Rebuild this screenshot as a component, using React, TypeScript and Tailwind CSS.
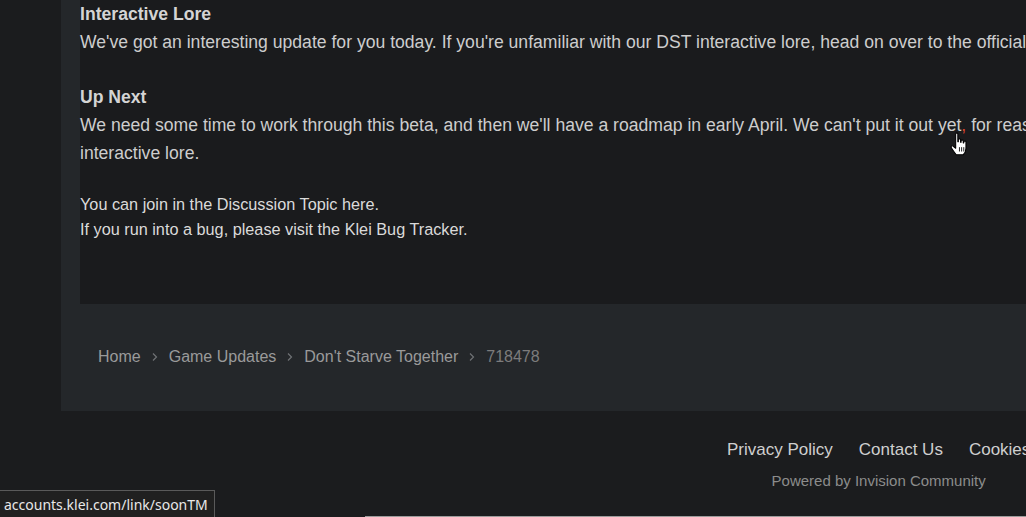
import React from "react";

function Chevron() {
  return (
    <svg width="6" height="10" viewBox="0 0 6 10" className="mx-[11px] shrink-0">
      <path d="M1 1.5 L4.5 5 L1 8.5" fill="none" stroke="#6f7275" strokeWidth="1.2" />
    </svg>
  );
}

function HandCursor() {
  return (
    <svg width="22" height="26" viewBox="0 0 20 24" className="absolute left-[949px] top-[132px]">
      <path
        d="M6 1.5 C6 0.7 8 0.7 8 1.5 L8 9 L8.5 9 L8.5 7 C8.5 6.2 10.5 6.2 10.5 7 L10.5 9.5 L11 9.5 L11 8 C11 7.2 13 7.2 13 8 L13 10 L13.5 10 L13.5 9 C13.5 8.2 15.5 8.2 15.5 9 L15.5 15 C15.5 18 14 20 13 21 L6.5 21 C5 19 3.5 17 2 14.5 C1.3 13.3 2.5 12.3 3.5 13 L6 15 Z"
        fill="#ffffff"
        stroke="#000000"
        strokeWidth="1"
        strokeLinejoin="round"
      />
      <path d="M9.5 14 L9.5 18 M11.5 14 L11.5 18 M13.5 14 L13.5 18" stroke="#000" strokeWidth="0.8" />
    </svg>
  );
}

export default function App() {
  return (
    <div
      className="relative w-[1026px] h-[517px] overflow-hidden bg-[#1b1c1e]"
      style={{ fontFamily: '"Liberation Sans", Arial, sans-serif' }}
    >
      <div className="ml-[61px] w-[1400px] bg-[#24272a] pl-[19px]">
        <div className="bg-[#1a1b1d] h-[304px] text-[17.6px] leading-[28px] text-[#cdcdcd]">
          <div className="whitespace-nowrap">
            <div className="font-bold text-[#d4d4d4]">Interactive Lore</div>
            <div>
              We've got an interesting update for you today. If you're unfamiliar with our DST interactive lore, head on over to the official forums to catch up.
            </div>
          </div>
          <div className="mt-[27px] whitespace-nowrap">
            <div className="font-bold text-[#d4d4d4]">Up Next</div>
            <div>
              We need some time to work through this beta, and then we'll have a roadmap in early April. We can't put it out yet
              <span className="text-[#d9452f]">,</span> for reasons related to the
            </div>
            <div>interactive lore.</div>
          </div>
          <div className="mt-[25px] text-[16.25px] leading-[25px] text-[#dadada] whitespace-nowrap">
            <div>You can join in the Discussion Topic here.</div>
            <div>If you run into a bug, please visit the Klei Bug Tracker.</div>
          </div>
        </div>
        <div className="h-[107px] pb-[2px] flex items-center pl-[18px] text-[16px] text-[#9a9a9a]">
          <span>Home</span>
          <Chevron />
          <span>Game Updates</span>
          <Chevron />
          <span>Don't Starve Together</span>
          <Chevron />
          <span className="text-[#7c7c7c]">718478</span>
        </div>
      </div>

      <div className="pl-[727px] pt-[28px] flex">
        <div className="flex flex-col items-center">
          <div className="flex gap-[26px] text-[17px] leading-[22px] text-[#cfcfcf] whitespace-nowrap">
            <span>Privacy Policy</span>
            <span>Contact Us</span>
            <span>Cookies</span>
          </div>
          <div className="mt-[11px] text-[15px] leading-[18px] text-[#8c8c8c] whitespace-nowrap">
            Powered by Invision Community
          </div>
        </div>
      </div>

      <HandCursor />

      <div
        className="absolute left-0 bottom-0 h-[27px] pl-[4px] pr-[6px] flex items-center bg-[#202020] border-t border-r border-[#5a5a5a] text-[14px] text-[#e8e8e8] whitespace-nowrap"
        style={{ fontFamily: '"Noto Sans", "Open Sans", sans-serif' }}
      >
        accounts.klei.com/link/soonTM
      </div>
      <div className="absolute left-[365px] right-0 bottom-0 h-px bg-[#9c9c9c]" />
    </div>
  );
}
